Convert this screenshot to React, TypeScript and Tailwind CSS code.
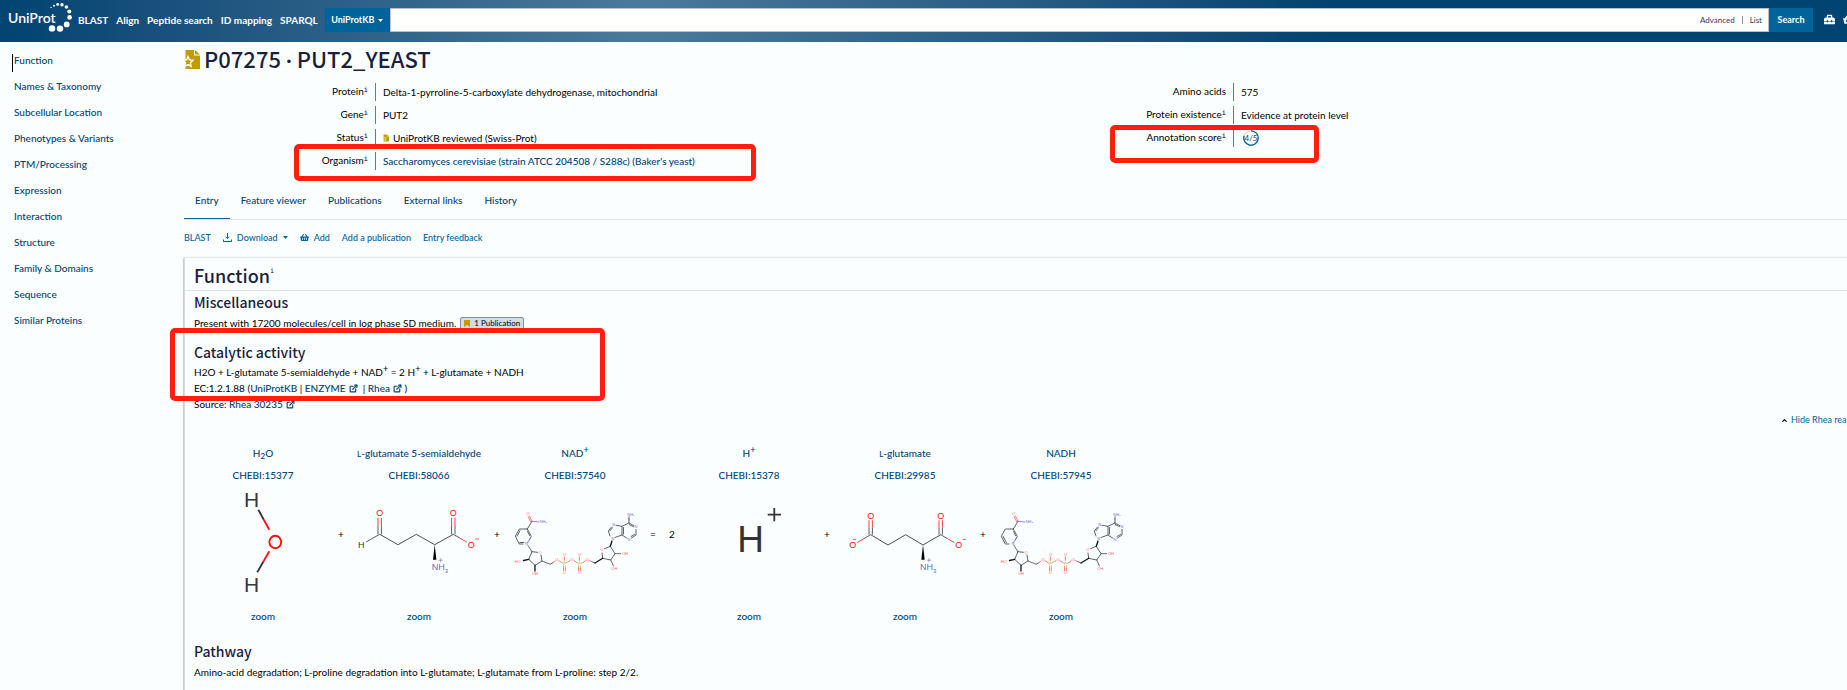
import type { ReactNode } from "react";
import { ExternalLink, ChevronUp } from "lucide-react";
import { FaToolbox, FaShoppingBasket } from "react-icons/fa";

const NAV = ["BLAST", "Align", "Peptide search", "ID mapping", "SPARQL"];

const SECTIONS = [
  "Function",
  "Names & Taxonomy",
  "Subcellular Location",
  "Phenotypes & Variants",
  "PTM/Processing",
  "Expression",
  "Interaction",
  "Structure",
  "Family & Domains",
  "Sequence",
  "Similar Proteins",
];

const TABS = ["Entry", "Feature viewer", "Publications", "External links", "History"];

const LOGO_DOTS = [
  [51, 7.4, 0.7],
  [54, 5.7, 1],
  [57.7, 4.4, 1.4],
  [62, 4.8, 1.7],
  [66.4, 7, 1.8],
  [69.3, 11.4, 2],
  [69.6, 17.4, 2.3],
  [66.7, 24.4, 2.9],
  [60, 28.6, 3.2],
  [52, 28.4, 3.2],
];

function Logo() {
  return (
    <svg width="76" height="36" viewBox="0 0 76 36" role="img" aria-label="UniProt">
      <text x="8" y="23" fontFamily="Lato, sans-serif" fontWeight="600" fontSize="14" fill="#fff">
        UniProt
      </text>
      {LOGO_DOTS.map(([x, y, r]) => (
        <circle key={`${x}-${y}`} cx={x} cy={y} r={r} fill="#fff" />
      ))}
    </svg>
  );
}

function ReviewedIcon({ className }: { className: string }) {
  return (
    <svg className={className} viewBox="0 0 16 19" aria-hidden="true">
      <path d="M1.500 0H10v5.500h6V19H1.500z" fill="#c39b00" />
      <path d="M11 0l5 4.600h-5z" fill="#c39b00" />
      <path
        d="M4 6.500l1.500 3.400 3.600.4-2.700 2.500.8 3.600L4 14.600.8 16.400l.8-3.600L-1 10.300l3.600-.4z"
        fill="#c39b00"
        stroke="#fff"
        strokeWidth="1.300"
      />
    </svg>
  );
}

function Caret() {
  return (
    <svg className="h-[3px] w-[5px]" viewBox="0 0 5 3" aria-hidden="true">
      <path d="M0 0h5L2.500 3z" fill="currentColor" />
    </svg>
  );
}

function Info() {
  return (
    <sup className="font-['DejaVu_Sans_Mono',monospace] text-[7px] leading-none font-normal">i</sup>
  );
}

function InfoRow({ label, info = true, children }: { label: string; info?: boolean; children: ReactNode }) {
  return (
    <div className="flex h-[18px]">
      <dt className="w-[184px] text-right leading-4">
        {label}
        {info && <Info />}
      </dt>
      <dd className="ml-[7px] flex items-center border-l border-[#0a9bc8] pl-[7px]">{children}</dd>
    </div>
  );
}

function ScoreRing() {
  return (
    <svg className="ml-[2px] h-4 w-4" viewBox="0 0 16 16" role="img" aria-label="4 out of 5">
      <circle cx="8" cy="8" r="7.200" fill="none" stroke="#c8d6e2" strokeWidth="1" />
      <path d="M8 .8A7.200 7.200 0 1 1 1.150 5.800" fill="none" stroke="#00639a" strokeWidth="1.300" />
      <text x="8" y="10.500" textAnchor="middle" fontSize="8" fill="#333a5c" fontFamily="Lato, sans-serif">
        4/5
      </text>
    </svg>
  );
}

function ExtLink({ children }: { children: ReactNode }) {
  return (
    <a href="#" className="inline-flex items-center gap-[3px] font-medium text-[#014371]">
      {children}
      <ExternalLink className="h-[9px] w-[9px]" strokeWidth={3} />
    </a>
  );
}

function Highlight({ className }: { className: string }) {
  return <div className={`pointer-events-none absolute rounded-[5px] border-[5px] border-[#ff1e10] ${className}`} />;
}

type Pt = [number, number];

function Bond({ a, b, c1 = "#333", c2 = c1, w = 0.8 }: { a: Pt; b: Pt; c1?: string; c2?: string; w?: number }) {
  const m: Pt = [(a[0] + b[0]) / 2, (a[1] + b[1]) / 2];
  return (
    <g strokeWidth={w}>
      <line x1={a[0]} y1={a[1]} x2={m[0]} y2={m[1]} stroke={c1} />
      <line x1={m[0]} y1={m[1]} x2={b[0]} y2={b[1]} stroke={c2} />
    </g>
  );
}

function Atom({ at, size, fill, children }: { at: Pt; size: number; fill: string; children: ReactNode }) {
  return (
    <text
      x={at[0]}
      y={at[1] + size * 0.36}
      fontSize={size}
      fill={fill}
      textAnchor="middle"
      fontFamily="'Liberation Sans', sans-serif"
    >
      {children}
    </text>
  );
}

function Canvas({ label, children }: { label: string; children: ReactNode }) {
  return (
    <svg className="h-[120px] w-full" viewBox="0 0 136 120" role="img" aria-label={label}>
      {children}
    </svg>
  );
}

const RED = "#ff0d0d";
const VIOLET = "#6b6bb8";

function Water() {
  return (
    <Canvas label="Water">
      <Bond a={[63.3, 25.7]} b={[74.3, 45.7]} c1="#333" c2={RED} w={1.8} />
      <Bond a={[62.3, 88.3]} b={[74.3, 67.3]} c1="#333" c2={RED} w={1.8} />
      <Atom at={[56.7, 15.3]} size={21} fill="#383838">H</Atom>
      <Atom at={[56.7, 100.3]} size={21} fill="#383838">H</Atom>
      <ellipse cx="80.300" cy="58" rx="5.900" ry="6.300" fill="none" stroke={RED} strokeWidth="1.900" />
    </Canvas>
  );
}

function Proton() {
  return (
    <Canvas label="Hydron">
      <Atom at={[69.7, 54.8]} size={37} fill="#333">H</Atom>
      <path d="M86.700 30.700h13.300M93.300 24v13.300" stroke="#333" strokeWidth="1.800" />
    </Canvas>
  );
}

function Carboxyl({ c, dir }: { c: Pt; dir: 1 | -1 }) {
  const o: Pt = [c[0] + 18 * dir, c[1] + 10.4];
  return (
    <g>
      <Bond a={c} b={[c[0] + 13.5 * dir, c[1] + 7.8]} c2={RED} />
      <Atom at={o} size={9} fill={RED}>O</Atom>
      <path d={`M${o[0] + (dir > 0 ? 4 : 0)} ${o[1] - 5.7}h3.500`} stroke={RED} strokeWidth="0.700" />
    </g>
  );
}

function Carbonyl({ c, o }: { c: Pt; o: Pt }) {
  return (
    <g>
      <Bond a={[c[0] - 1.7, c[1]]} b={[c[0] - 1.7, o[1] + 5]} c2={RED} />
      <Bond a={[c[0] + 1.7, c[1]]} b={[c[0] + 1.7, o[1] + 5]} c2={RED} />
      <Atom at={o} size={9} fill={RED}>O</Atom>
    </g>
  );
}

function Ammonium({ at }: { at: Pt }) {
  const [x, y] = at;
  return (
    <g>
      <path d={`M${x} ${y}l-1.700 15h3.400z`} fill="#000" />
      <text x={x - 3} y={y + 25} fontSize="9" fill={VIOLET} fontFamily="'Liberation Sans', sans-serif">
        NH
      </text>
      <text x={x + 10} y={y + 28} fontSize="6" fill={VIOLET} fontFamily="'Liberation Sans', sans-serif">
        3
      </text>
      <path d={`M${x + 4} ${y + 15.5}h4M${x + 6} ${y + 13.5}v4`} stroke={VIOLET} strokeWidth="0.600" />
    </g>
  );
}

function Semialdehyde() {
  return (
    <Canvas label="L-glutamate 5-semialdehyde">
      <Carbonyl c={[28.7, 50.3]} o={[28.7, 28.7]} />
      <Bond a={[15, 58]} b={[28.7, 50.3]} />
      <Atom at={[10.3, 60.7]} size={9} fill="#333">H</Atom>
      <path
        d="M28.700 50.300L47 60.700 65.300 50.300 83.700 60.700 102.300 50.300"
        fill="none"
        stroke="#222"
        strokeWidth="0.800"
      />
      <Carbonyl c={[102.3, 50.3]} o={[102.3, 28.7]} />
      <Carboxyl c={[102.3, 50.3]} dir={1} />
      <Ammonium at={[83.7, 60.7]} />
    </Canvas>
  );
}

function Glutamate() {
  return (
    <Canvas label="L-glutamate">
      <Carbonyl c={[33.7, 50.7]} o={[33.7, 31.3]} />
      <Carboxyl c={[33.7, 50.7]} dir={-1} />
      <path
        d="M33.700 50.700L51 61 68.700 50.700 86 61 103.700 50.700"
        fill="none"
        stroke="#222"
        strokeWidth="0.800"
      />
      <Carbonyl c={[103.7, 50.7]} o={[103.7, 31.3]} />
      <Carboxyl c={[103.7, 50.7]} dir={1} />
      <Ammonium at={[86, 60.7]} />
    </Canvas>
  );
}

function Dinucleotide({ reduced = false }: { reduced?: boolean }) {
  const o = "#ff5a5a";
  const n = "#7070cc";
  const p = "#d09a3c";
  const k = "#3a3a3a";
  const small = (at: Pt, t: string, fill: string) => (
    <Atom key={`${at[0]}-${at[1]}`} at={at} size={4} fill={fill}>
      {t}
    </Atom>
  );
  return (
    <Canvas label={reduced ? "NADH" : "NAD+"}>
      <g fill="none" strokeWidth="0.800" strokeLinecap="round">
        <g stroke={k}>
          <path d="M20.300 45L25 37.300M20.300 45L12.300 45 8.300 52.300 12.300 60 16 60M20.300 45L24.300 52.300 22.300 56" />
          <path
            d={
              reduced
                ? "M10 52.300L13.300 58.600M20.700 47.600L22.700 51.800"
                : "M13 46.600L10 52.200M12.900 58.500h4M20.500 47.500L22.700 51.600"
            }
          />
          <path d="M25 67.700L21.700 75.300 28 81.300 35 77 34 71M25 67.700L30.500 68.300" />
          <path d="M21 61.500L25 67.700" strokeDasharray="1 0.800" />
          <path d="M35 77L43.300 80.300" strokeDasharray="1 0.800" />
          <path d="M43.300 80.300L46 78.500M88 79L84.500 77.500" />
          <path d="M95.700 74.300L103.700 76 108 69.700 103.300 62.300 97.500 64.700M95.700 74.300L95 69" />
          <path d="M103.700 76L106.500 82M108 69.700L114 69.700" strokeDasharray="0.800 0.800" />
          <path d="M103 52L101.300 47 104.500 43M109 41.300L115 42.300 115 51 108 53.500M115 42.300L122 39 122 34M122 39L127 41.700M115 51L120 54.200M124.500 54L129 51 129 45.500" />
          <path d="M103 46.800L105.500 43.700M116.500 43.500V50M122.300 40.600L126.500 42.700M124 52.500L127.500 50.500" />
        </g>
        <g stroke="#111" strokeWidth="1.300">
          <path d="M21.700 75.300L16.500 76.500M28 81.300V87M95.700 74.300L88 79M103.300 62.300L105 57" />
        </g>
        <path
          d="M25 37.300L22.400 32M23.800 38L21.200 32.700M46 78.500L47.800 77.300M52 76.700L54 78M57.300 75V73M58.300 84.500V86.500M56.500 84.500V86.500M62 77.300L63 76.700M67 76.700L69 78M72.300 75V73M73.300 84.500V86.500M71.500 84.500V86.500M77 78L78.200 76.700M82 76.400L84.500 77.500"
          stroke={o}
        />
        <path
          d="M54 78L55.500 79M59 79L62 77.300M57.300 77V75M58.300 82V84.500M56.500 82V84.500M69 78L70.500 79M74 79.300L77 78M72.300 77V75M73.300 82V84.500M71.500 82V84.500"
          stroke={p}
        />
        <path d="M25 37.300L32 38M122 36V32.500M20.500 58.500L22.300 56" stroke={n} />
      </g>
      {small([20.7, 29.7], "O", o)}
      {small([36.3, 38], "NH₂", n)}
      {small([20, 60], reduced ? "N" : "N⁺", n)}
      {small([33, 68.7], "O", o)}
      {small([10.7, 77.7], "HO", o)}
      {small([28, 90], "OH", o)}
      {small([49.7, 76], "O", o)}
      {small([57.3, 79.7], "P", p)}
      {small([58, 71], "O⁻", o)}
      {small([57.3, 89], "O", o)}
      {small([65, 76], "O", o)}
      {small([72.3, 79.7], "P", p)}
      {small([73, 71], "O⁻", o)}
      {small([72.3, 89], "O", o)}
      {small([80, 76], "O", o)}
      {small([94.7, 66], "O", o)}
      {small([118, 69.7], "OH", o)}
      {small([107.3, 84.7], "OH", o)}
      {small([105.7, 54.5], "N", n)}
      {small([106.7, 41], "N", n)}
      {small([122, 55.3], "N", n)}
      {small([129, 43], "N", n)}
      {small([124, 30.5], "NH₂", n)}
    </Canvas>
  );
}

function Molecule({ name, chebi, children }: { name: ReactNode; chebi: string; children: ReactNode }) {
  return (
    <div className="flex w-[136px] flex-col items-center font-medium text-[#014371]">
      <a href="#" className="h-4 whitespace-nowrap">{name}</a>
      <a href="#" className="mt-1.5 mb-px h-4">{chebi}</a>
      {children}
      <button type="button" className="mt-1 h-4">zoom</button>
    </div>
  );
}

function Op({ children }: { children: ReactNode }) {
  return <span className="mt-[81px] w-5 text-center">{children}</span>;
}

function Charge() {
  return <sup className="text-[9px] leading-none">+</sup>;
}

const HEADING = "font-['Noto_Sans_CJK_SC',sans-serif] font-medium text-[#1b1f3d]";

export default function App() {
  return (
    <div className="overflow-hidden bg-[#fbfeff] font-[Lato,sans-serif] text-[10px] leading-4 text-black">
      <header className="flex h-[42px] items-start overflow-hidden bg-linear-to-r from-[#014371] via-[#4a7a9c] via-35% to-[#014371] to-72% text-white">
        <a href="#" className="shrink-0"><Logo /></a>
        <nav className="mt-3 ml-[2px] flex shrink-0 gap-2 font-bold whitespace-nowrap">
          {NAV.map((n) => (
            <a key={n} href="#">{n}</a>
          ))}
        </nav>
        <form className="mt-2 ml-[7px] flex h-6 flex-1">
          <button type="button" className="flex w-[65px] items-center justify-center gap-1 bg-[#00639a] text-[9px] font-bold">
            UniProtKB <Caret />
          </button>
          <div className="flex flex-1 items-center border border-[#b9bfc6] bg-white pr-1.5 text-[8px] text-[#333a5c]">
            <input aria-label="Search UniProtKB" className="h-full min-w-0 flex-1 px-2 outline-none" />
            <a href="#">Advanced</a>
            <span className="mx-[7px] h-2 border-l border-[#8a90a5]" />
            <a href="#">List</a>
          </div>
          <button type="button" className="w-11 bg-[#00639a] text-[9px] font-bold">Search</button>
        </form>
        <div className="mt-[14px] flex w-[34px] shrink-0 gap-2 pl-[11px]">
          <FaToolbox className="h-[11px] w-[11px] shrink-0" />
          <FaShoppingBasket className="h-[11px] w-[11px] shrink-0" />
        </div>
      </header>

      <div className="flex">
        <aside className="w-[184px] shrink-0 pt-3 pl-3 leading-3 font-medium text-[#014371]">
          {SECTIONS.map((s, i) => (
            <div key={s} className="mb-2 h-[18px]">
              <a
                href="#"
                className={i === 0 ? "block h-[18px] border-l border-black pl-px" : "block h-[18px] pl-[2px]"}
              >
                {s}
              </a>
            </div>
          ))}
        </aside>

        <main className="min-w-0 flex-1">
          <h1 className={`flex h-[34px] items-center gap-1 text-[22px] ${HEADING}`}>
            <ReviewedIcon className="h-[19px] w-4" />
            <span>P07275 <span className="font-[Lato]">·</span> PUT2_YEAST</span>
          </h1>

          <div className="relative mt-[7px] grid grid-cols-[858px_1fr]">
            <dl className="flex flex-col gap-[5px]">
              <InfoRow label="Protein">Delta-1-pyrroline-5-carboxylate dehydrogenase, mitochondrial</InfoRow>
              <InfoRow label="Gene">PUT2</InfoRow>
              <InfoRow label="Status">
                <ReviewedIcon className="mr-1 h-2 w-[6px]" />
                UniProtKB reviewed (Swiss-Prot)
              </InfoRow>
              <InfoRow label="Organism">
                <a href="#" className="font-medium text-[#014371]">
                  Saccharomyces cerevisiae (strain ATCC 204508 / S288c) (Baker's yeast)
                </a>
              </InfoRow>
            </dl>
            <dl className="flex flex-col gap-[5px]">
              <InfoRow label="Amino acids" info={false}>575</InfoRow>
              <InfoRow label="Protein existence">Evidence at protein level</InfoRow>
              <InfoRow label="Annotation score"><ScoreRing /></InfoRow>
            </dl>
            <Highlight className="top-[61px] left-[110px] h-[37px] w-[462px]" />
            <Highlight className="top-[42px] left-[926px] h-[38px] w-[209px]" />
          </div>

          <div role="tablist" className="mt-3 flex h-[38px] border-b border-[#dfe4e8] text-[#014371]">
            {TABS.map((t, i) => (
              <button
                key={t}
                type="button"
                role="tab"
                aria-selected={i === 0}
                className={
                  i === 0 ? "border-b border-[#00639a] px-[11px] pb-px font-medium" : "px-[11px] pb-[2px] font-medium"
                }
              >
                {t}
              </button>
            ))}
          </div>

          <div className="mb-[2px] flex h-[35px] items-center gap-3 text-[9px] font-medium text-[#00639a]">
            <button type="button">BLAST</button>
            <button type="button" className="flex items-center gap-[5px]">
              <svg className="h-[9px] w-[9px]" viewBox="0 0 9 9" fill="none" stroke="currentColor" aria-hidden="true">
                <path d="M4.500 0v5.500M2.500 3.700l2 2 2-2M.5 6.500v2h8v-2" />
              </svg>
              Download <Caret />
            </button>
            <button type="button" className="flex items-center gap-[5px]">
              <FaShoppingBasket className="h-[9px] w-[9px]" />
              Add
            </button>
            <button type="button">Add a publication</button>
            <button type="button">Entry feedback</button>
          </div>

          <section className="rounded-tl-[3px] border-t border-l border-t-[#e6eaed] border-l-[#d5dae0] shadow-[-1px_0_1px_#c3cad2]">
            <h2 className={`flex h-[33px] items-center border-b border-[#dfe4e8] pt-[2px] pl-[9px] text-[18px] ${HEADING}`}>
              Function
              <Info />
            </h2>
            <div className="relative pl-[9px]">
              <h3 className={`mb-px text-[14px] leading-[22px] ${HEADING}`}>Miscellaneous</h3>
              <p className="flex h-[18px] items-center">
                Present with 17200 molecules/cell in log phase SD medium.
                <button
                  type="button"
                  className="ml-1 flex h-[13px] items-center gap-1 rounded-[2px] border border-[#7e90a4] bg-[#d3dbe3] px-[3px] text-[8px]"
                >
                  <svg className="h-[7px] w-[6px]" viewBox="0 0 6 7" aria-hidden="true">
                    <path d="M0 0h6v7L3 5 0 7z" fill="#c39b00" />
                  </svg>
                  1 Publication
                </button>
              </p>
              <h3 className={`mt-[9px] mb-px text-[14px] leading-[22px] ${HEADING}`}>Catalytic activity</h3>
              <p className="h-4">
                H2O + L-glutamate 5-semialdehyde + NAD<Charge /> = 2 H<Charge /> + L-glutamate + NADH
              </p>
              <p className="h-4">
                EC:1.2.1.88 (<a href="#" className="font-medium text-[#014371]">UniProtKB</a> | <ExtLink>ENZYME</ExtLink>
                {" \u00a0"}| <ExtLink>Rhea</ExtLink> )
              </p>
              <p className="h-4">
                Source: <ExtLink>Rhea 30235</ExtLink>
              </p>
              <Highlight className="top-[37px] -left-[15px] h-[73px] w-[435px]" />
              <button
                type="button"
                className="ml-auto flex h-4 w-[66px] items-center gap-[3px] text-[9px] whitespace-nowrap text-[#00639a]"
              >
                <ChevronUp className="h-[7px] w-[7px] shrink-0 text-black" strokeWidth={4} />
                Hide Rhea rea
              </button>

              <div className="mt-[17px] flex items-start pl-px">
                <Molecule name={<>H<sub className="text-[8px] leading-none">2</sub>O</>} chebi="CHEBI:15377">
                  <Water />
                </Molecule>
                <Op>+</Op>
                <Molecule name={<><span className="text-[8px]">L</span>-glutamate 5-semialdehyde</>} chebi="CHEBI:58066">
                  <Semialdehyde />
                </Molecule>
                <Op>+</Op>
                <Molecule name={<>NAD<Charge /></>} chebi="CHEBI:57540">
                  <Dinucleotide />
                </Molecule>
                <Op>=</Op>
                <span className="mt-[81px] w-[18px] text-center">2</span>
                <Molecule name={<>H<Charge /></>} chebi="CHEBI:15378">
                  <Proton />
                </Molecule>
                <Op>+</Op>
                <Molecule name={<><span className="text-[8px]">L</span>-glutamate</>} chebi="CHEBI:29985">
                  <Glutamate />
                </Molecule>
                <Op>+</Op>
                <Molecule name="NADH" chebi="CHEBI:57945">
                  <Dinucleotide reduced />
                </Molecule>
              </div>

              <h3 className={`mt-4 mb-[2px] text-[14px] leading-[22px] ${HEADING}`}>Pathway</h3>
              <p className="pb-3">
                Amino-acid degradation; L-proline degradation into L-glutamate; L-glutamate from L-proline: step 2/2.
              </p>
            </div>
          </section>
        </main>
      </div>
    </div>
  );
}
